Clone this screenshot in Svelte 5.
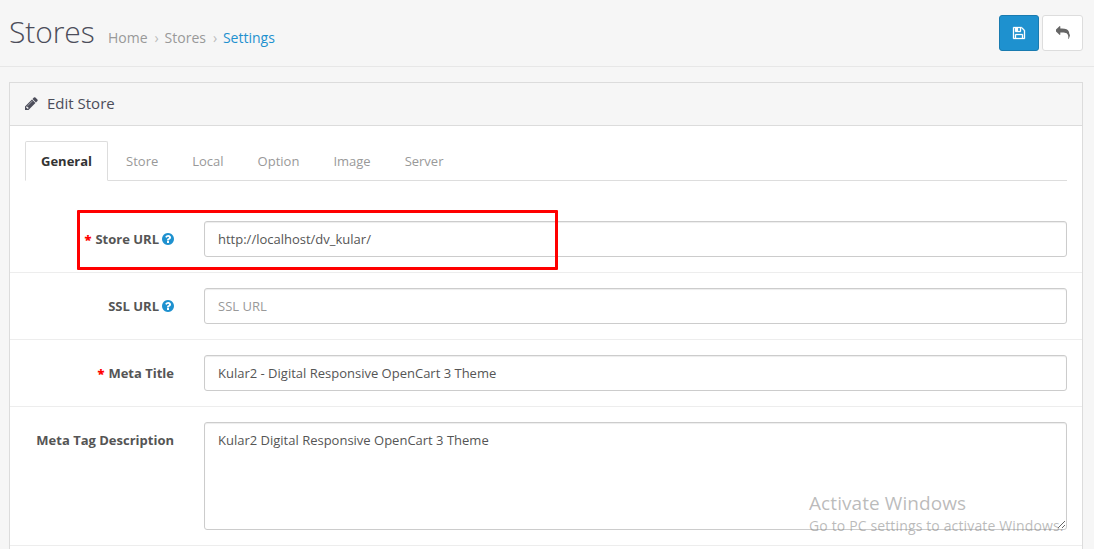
<script>
  const tabs = ['General', 'Store', 'Local', 'Option', 'Image', 'Server'];
  const fields = [
    { label: 'Store URL', required: true, help: true, value: 'http://localhost/dv_kular/', marked: true },
    { label: 'SSL URL', help: true, value: '', placeholder: 'SSL URL' },
    { label: 'Meta Title', required: true, value: 'Kular2 - Digital Responsive OpenCart 3 Theme' },
    { label: 'Meta Tag Description', value: 'Kular2 Digital Responsive OpenCart 3 Theme', area: true }
  ];
  let active = $state('General');
</script>

<div class="page">
  <header>
    <h1>Stores</h1>
    <nav>
      <span>Home</span><i>›</i><span>Stores</span><i>›</i><span class="here">Settings</span>
    </nav>
    <div class="actions">
      <button class="save" aria-label="Save">
        <svg viewBox="0 0 1792 1792"><path d="M512 1536h768v-384h-768v384zm896 0h128v-896q0-14-10-38.500t-20-34.500l-281-281q-10-10-34-20t-39-10v416q0 40-28 68t-68 28h-576q-40 0-68-28t-28-68v-416h-128v1280h128v-416q0-40 28-68t68-28h832q40 0 68 28t28 68v416zm-384-928v-320q0-13-9.500-22.500t-22.500-9.500h-192q-13 0-22.500 9.500t-9.500 22.500v320q0 13 9.500 22.500t22.500 9.500h192q13 0 22.500-9.500t9.500-22.500zm640 32v928q0 40-28 68t-68 28h-1344q-40 0-68-28t-28-68v-1344q0-40 28-68t68-28h928q40 0 88 20t76 48l280 280q28 28 48 76t20 88z" /></svg>
      </button>
      <button class="back" aria-label="Back">
        <svg viewBox="0 0 1792 1792"><path d="M1792 1120q0 166-127 451-3 7-10.500 24t-13.500 30-13 22q-12 17-28 17-15 0-23.500-10t-8.500-25q0-9 2.500-26.500t2.500-23.500q5-68 5-123 0-112-19.500-200.500t-54-153.500-89-112-118-78.500-149.500-49-175.500-24-196-7.500h-224v256q0 26-19 45t-45 19-45-19l-512-512q-19-19-19-45t19-45l512-512q19-19 45-19t45 19 19 45v256h224q713 0 875 403 53 134 53 333z" /></svg>
      </button>
    </div>
  </header>

  <section class="panel">
    <h3>
      <svg viewBox="0 0 1792 1792"><path d="M491 1536l91-91-235-235-91 91v107h128v128h107zm523-928q0-22-22-22-10 0-17 7l-542 542q-7 7-7 17 0 22 22 22 10 0 17-7l542-542q7-7 7-17zm-54-192l416 416-832 832h-416v-416zm683 96q0 53-37 90l-166 166-416-416 166-165q36-38 90-38 53 0 91 38l235 234q37 39 37 91z" transform="translate(-128 0)" /></svg>
      <span>Edit Store</span>
    </h3>
    <div class="tabs">
      {#each tabs as tab}
        <button class:active={active === tab} onclick={() => (active = tab)}>{tab}</button>
      {/each}
    </div>
    <form>
      {#each fields as f}
        <div class="row">
          <div class="label">
            {#if f.required}<b>*</b>{/if}<span>{f.label}</span>
            {#if f.help}
              <svg viewBox="128 128 1536 1536"><path d="M1024 1376v-192q0-14-9-23t-23-9h-192q-14 0-23 9t-9 23v192q0 14 9 23t23 9h192q14 0 23-9t9-23zm256-672q0-88-55.500-163t-138.500-116-170-41q-243 0-371 213-15 24 8 42l132 100q7 6 19 6 16 0 25-12 53-68 86-92 34-24 86-24 48 0 85.500 26t37.500 59q0 38-20 61t-68 45q-63 28-115.500 86.500t-52.500 125.500v36q0 14 9 23t23 9h192q14 0 23-9t9-23q0-19 21.500-49.500t54.500-49.500q32-18 49-28.500t46-35 44.500-48 28-60.500 12.500-81zm384 192q0 209-103 385.500t-279.500 279.500-385.500 103-385.500-103-279.500-279.500-103-385.500 103-385.500 279.500-279.500 385.500-103 385.500 103 279.500 279.500 103 385.500z" /></svg>
            {/if}
          </div>
          {#if f.area}
            <textarea aria-label={f.label} value={f.value} spellcheck="false"></textarea>
          {:else}
            <input type="text" aria-label={f.label} value={f.value} placeholder={f.placeholder} />
          {/if}
          {#if f.marked}<div class="mark"></div>{/if}
        </div>
      {/each}
    </form>
  </section>

  <div class="notice">
    <p class="big">Activate Windows</p>
    <p class="small">Go to PC settings to activate Windows.</p>
  </div>
</div>

<style>
  :global(body) { background: #f6f6f6; overflow: hidden; }
  .page {
    position: relative;
    height: 549px;
    overflow: hidden;
    font: 13px/20px 'Open Sans', sans-serif;
    color: #4c4d5a;
  }
  * { box-sizing: border-box; }
  svg { display: block; fill: currentColor; flex: none; }
  button, input, textarea { font: inherit; margin: 0; }

  header {
    display: flex;
    height: 67px;
    padding: 0 11px 0 9px;
    border-bottom: 1px solid #e7e7e7;
  }
  h1 {
    margin: 0;
    padding-top: 12px;
    width: 99px;
    font-size: 30px;
    line-height: 40px;
    font-weight: 300;
    letter-spacing: -0.1px;
    white-space: nowrap;
  }
  nav {
    display: flex;
    padding-top: 28px;
    font-size: 14px;
    color: #999;
  }
  nav i { font-style: normal; color: #bbb; width: 17px; padding-left: 7px; }
  .here { color: #1e91cf; }
  .actions { display: flex; gap: 3px; margin: 15px 0 0 auto; }
  .actions button {
    display: flex;
    align-items: center;
    justify-content: center;
    height: 36px;
    padding: 0;
    border-radius: 3px;
  }
  .actions svg { width: 14px; height: 14px; }
  .save svg { stroke: currentColor; stroke-width: 40px; }
  .save { width: 40px; background: #1e91cf; border: 1px solid #197bb0; color: #fff; }
  .back { width: 41px; background: #fff; border: 1px solid #ddd; color: #666; }

  .panel {
    margin: 15px 11px 0 9px;
    border: 1px solid #dcdcdc;
    background: #fff;
    height: 600px;
  }
  h3 {
    display: flex;
    align-items: center;
    gap: 7px;
    height: 43px;
    margin: 0;
    padding: 0 15px 2px;
    background: #f6f6f6;
    border-bottom: 1px solid #dcdcdc;
    font-size: 15px;
    font-weight: 400;
  }
  h3 svg { width: 15px; height: 15px; }
  .tabs {
    display: flex;
    gap: 2px;
    height: 40px;
    margin: 15px 15px 25px;
    border-bottom: 1px solid #ddd;
  }
  .tabs button {
    height: 40px;
    padding: 0 15px;
    border: 1px solid transparent;
    border-radius: 2px 2px 0 0;
    background: none;
    color: #999;
  }
  .tabs .active {
    background: #fff;
    border-color: #ddd #ddd #fff;
    color: #333;
    font-weight: 700;
  }
  .row {
    position: relative;
    display: flex;
    padding: 15px 15px 15px 0;
    border-bottom: 1px solid #ededed;
  }
  .label {
    display: flex;
    align-items: center;
    justify-content: flex-end;
    width: 164px;
    height: 36px;
    margin-right: 30px;
    font-weight: 700;
    color: #555;
    white-space: nowrap;
  }
  .label b { color: #f00; margin-right: 4px; }
  .label svg { width: 12px; height: 12px; margin-left: 3px; color: #1e91cf; }
  input, textarea {
    flex: 1;
    height: 36px;
    padding: 7px 13px;
    border: 1px solid #ccc;
    border-radius: 3px;
    background: #fff;
    color: #555;
    box-shadow: inset 0 1px 1px rgba(0, 0, 0, 0.075);
    outline: none;
  }
  textarea { height: 108px; padding: 7px 13px; }
  input::placeholder { color: #999; }
  .mark {
    position: absolute;
    left: 67px;
    top: 4px;
    width: 481px;
    height: 60px;
    border: 3px solid #f00;
    border-radius: 1px;
  }
  .notice {
    position: absolute;
    left: 809px;
    top: 490px;
    color: rgba(120, 120, 120, 0.5);
    white-space: nowrap;
    pointer-events: none;
  }
  .notice p { margin: 0; }
  .big { font-size: 19px; line-height: 26px; letter-spacing: 0.08px; }
  .small { font-size: 14px; line-height: 20px; letter-spacing: 0.14px; }
</style>
